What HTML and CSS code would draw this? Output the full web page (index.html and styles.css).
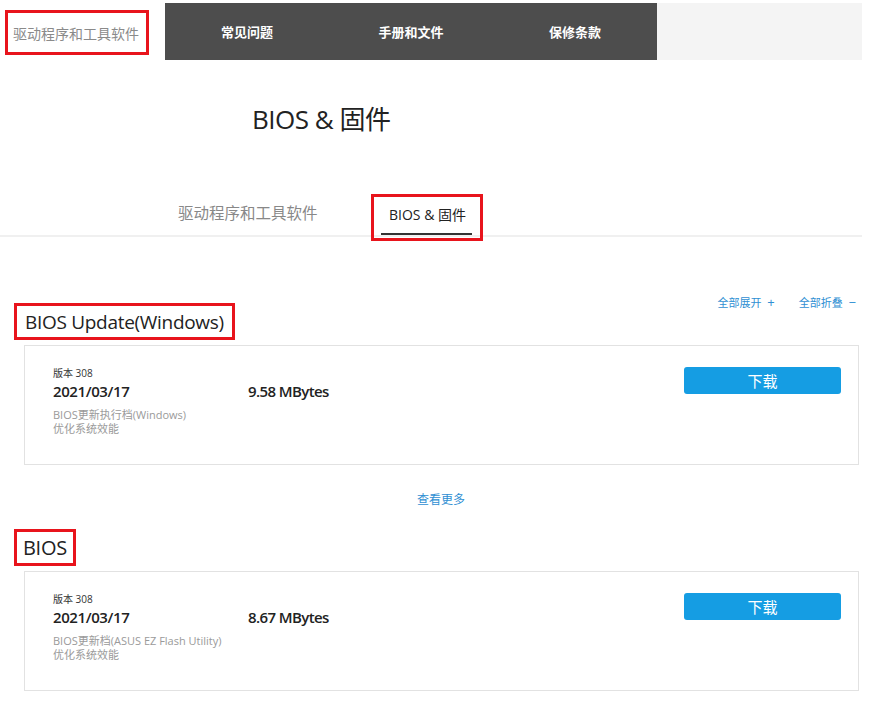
FILE: index.html
```html
<!DOCTYPE html>
<html lang="zh">
<head>
<meta charset="utf-8">
<title>BIOS &amp; 固件</title>
<link rel="stylesheet" href="styles.css">
</head>
<body>
<div class="page">
  <nav class="topnav">
    <div class="nav-first"><span class="redbox nav-first-box">驱动程序和工具软件</span></div>
    <div class="nav-dark">
      <a class="nav-item">常见问题</a>
      <a class="nav-item">手册和文件</a>
      <a class="nav-item">保修条款</a>
    </div>
    <div class="nav-rest"></div>
  </nav>

  <h1 class="page-title">BIOS &amp; 固件</h1>

  <div class="tabs">
    <div class="tab">驱动程序和工具软件</div>
    <div class="tab-active-box redbox"><span class="tab-active">BIOS &amp; 固件</span></div>
  </div>

  <div class="toolbar">
    <a class="tool">全部展开 <span class="sym">+</span></a>
    <a class="tool">全部折叠 <span class="sym">−</span></a>
  </div>

  <section class="group">
    <h2 class="group-title redbox">BIOS Update(Windows)</h2>
    <div class="card">
      <div class="info">
        <div class="ver">版本 308</div>
        <div class="row">
          <span class="date">2021/03/17</span>
          <span class="size">9.58 MBytes</span>
        </div>
        <div class="desc">BIOS更新执行档(Windows)<br>优化系统效能</div>
      </div>
      <button class="dl">下载</button>
    </div>
  </section>

  <div class="more"><a>查看更多</a></div>

  <section class="group group2">
    <h2 class="group-title redbox">BIOS</h2>
    <div class="card">
      <div class="info">
        <div class="ver">版本 308</div>
        <div class="row">
          <span class="date">2021/03/17</span>
          <span class="size">8.67 MBytes</span>
        </div>
        <div class="desc">BIOS更新档(ASUS EZ Flash Utility)<br>优化系统效能</div>
      </div>
      <button class="dl">下载</button>
    </div>
  </section>
</div>
</body>
</html>
```

FILE: styles.css
```css
* { box-sizing: border-box; }
body {
  margin: 0;
  background: #fff;
  font-family: "Open Sans", "Noto Sans CJK SC", sans-serif;
  color: #222;
}
.page {
  width: 862px;
  padding-top: 3px;
}
.redbox {
  border: 3px solid #e8141c;
}
.topnav {
  display: flex;
  height: 57px;
}
.nav-first {
  width: 165px;
  padding: 7px 0 0 5px;
}
.nav-first-box {
  display: flex;
  align-items: center;
  width: 144px;
  height: 45px;
  padding-left: 5px;
  font-size: 14px;
  color: #8a8a8a;
  background: #fff;
}
.nav-dark {
  display: grid;
  grid-template-columns: repeat(3, 164px);
  background: #4d4d4d;
}
.nav-item {
  display: flex;
  align-items: center;
  justify-content: center;
  color: #fff;
  font-size: 13px;
  font-weight: bold;
}
.nav-rest {
  flex: 1;
  background: #f4f4f4;
}
.page-title {
  margin: 0;
  padding: 41px 0 0 252px;
  height: 130px;
  font-size: 26px;
  font-weight: 400;
  letter-spacing: -0.5px;
  color: #222;
  line-height: 36px;
}
.tabs {
  display: flex;
  align-items: flex-end;
  height: 47px;
  border-bottom: 2px solid #f0f0f0;
}
.tab {
  margin-left: 178px;
  width: 193px;
  height: 40px;
  font-size: 15.5px;
  color: #888;
  padding-top: 6px;
}
.tab-active-box {
  width: 112px;
  height: 47px;
  margin-bottom: -6px;
  padding: 7px 0 0 7px;
}
.tab-active {
  display: block;
  width: 91px;
  padding: 0 0 9px 8px;
  font-size: 14px;
  color: #222;
  border-bottom: 2px solid #333;
}
.toolbar {
  display: flex;
  justify-content: flex-end;
  gap: 24px;
  padding: 58px 6px 0 0;
  height: 66px;
}
.tool {
  font-size: 11px;
  color: #2f8fd3;
  line-height: 14px;
}
.sym {
  font-size: 13px;
  margin-left: 3px;
}
.group {
  padding-left: 14px;
}
.group-title {
  display: inline-flex;
  align-items: center;
  margin: 0;
  height: 37px;
  padding: 0 8px;
  font-size: 19px;
  letter-spacing: -0.3px;
  font-weight: 400;
  color: #222;
}
.card {
  display: flex;
  justify-content: space-between;
  align-items: flex-start;
  margin: 5px 0 0 10px;
  width: 835px;
  height: 120px;
  border: 1px solid #e2e2e2;
  padding: 21px 17px 0 28px;
}
.ver {
  font-size: 10px;
  line-height: 13px;
  color: #333;
}
.row {
  display: flex;
  align-items: baseline;
  margin-top: 1px;
}
.date {
  width: 195px;
  font-size: 15px;
  font-weight: 600;
  letter-spacing: -0.4px;
  line-height: 20px;
}
.size {
  font-size: 15px;
  font-weight: 600;
  letter-spacing: -0.6px;
  line-height: 20px;
}
.desc {
  margin-top: 7px;
  font-size: 11px;
  line-height: 14px;
  color: #9a9a9a;
}
.dl {
  margin-top: 0;
  width: 157px;
  height: 27px;
  border: none;
  border-radius: 3px;
  background: #159de3;
  color: #fff;
  font-family: "Open Sans", "Noto Sans CJK SC", sans-serif;
  font-size: 15px;
}
.more {
  padding-top: 27px;
  height: 64px;
  text-align: center;
  font-size: 12px;
  color: #2f8fd3;
  line-height: 16px;
  padding-left: 20px;
}
.group2 .group-title {
  padding: 0 6px;
  font-size: 20px;
}
```
